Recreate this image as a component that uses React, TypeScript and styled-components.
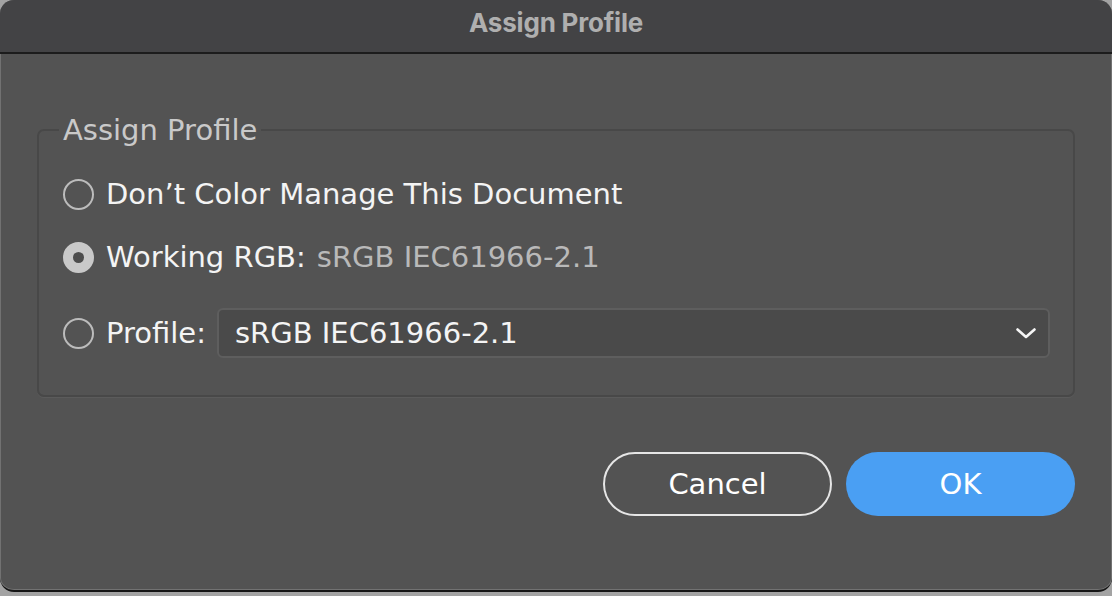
import styled, { createGlobalStyle } from 'styled-components';

const GlobalStyle = createGlobalStyle`
  html, body {
    margin: 0;
    padding: 0;
    background: #a3a3a3;
  }
  * {
    box-sizing: border-box;
  }
`;

interface RadioProps {
  readonly $checked?: boolean;
}

export default function App() {
  return (
    <>
      <GlobalStyle />
      <Window>
        <TitleBar>Assign Profile</TitleBar>
        <Body>
          <Group>
            <Legend>Assign Profile</Legend>
            <OptionRow>
              <Radio />
              <Label>Don’t Color Manage This Document</Label>
            </OptionRow>
            <OptionRow>
              <Radio $checked />
              <Label>Working RGB:</Label>
              <Value>sRGB IEC61966-2.1</Value>
            </OptionRow>
            <SelectRow>
              <Radio />
              <Label>Profile:</Label>
              <Select>
                <span>sRGB IEC61966-2.1</span>
                <svg width="20" height="11" viewBox="0 0 20 11">
                  <path
                    d="M1.5 1.5 L10 9 L18.5 1.5"
                    fill="none"
                    stroke="#f5f5f5"
                    strokeWidth="2.6"
                    strokeLinecap="round"
                    strokeLinejoin="round"
                  />
                </svg>
              </Select>
            </SelectRow>
          </Group>
          <Actions>
            <CancelButton>Cancel</CancelButton>
            <OkButton>OK</OkButton>
          </Actions>
        </Body>
      </Window>
    </>
  );
}

const Window = styled.div`
  width: 1112px;
  height: 592px;
  display: flex;
  flex-direction: column;
  background: #535353;
  border-radius: 14px;
  overflow: hidden;
  border-bottom: 2px solid #151515;
  box-shadow: inset 0 0 0 1px rgba(255, 255, 255, 0.18);
`;

const TitleBar = styled.div`
  height: 54px;
  flex: none;
  display: flex;
  align-items: center;
  justify-content: center;
  padding-bottom: 8px;
  background: #434345;
  border-bottom: 2px solid #1c1c1c;
  color: #afafaf;
  font-family: Inter, 'Liberation Sans', sans-serif;
  font-weight: 700;
  font-size: 26px;
  letter-spacing: -0.2px;
`;

const Body = styled.div`
  flex: 1;
  display: flex;
  flex-direction: column;
  padding: 59px 37px 0;
  font-family: 'DejaVu Sans', sans-serif;
`;

const Group = styled.fieldset`
  margin: 0;
  padding: 27px 24px 37px 24px;
  border: 2px solid #484848;
  border-radius: 7px;
  box-shadow: 0 1px 0 rgba(255, 255, 255, 0.05);
`;

const Legend = styled.legend`
  padding: 0 4px;
  margin-left: -4px;
  line-height: 34px;
  font-size: 29px;
  color: #c9c9c9;
`;

const OptionRow = styled.div`
  height: 40px;
  display: flex;
  align-items: center;
  margin-bottom: 23px;
`;

const SelectRow = styled(OptionRow)`
  height: 50px;
  margin-top: 31px;
  margin-bottom: 0;
`;

const Radio = styled.span<RadioProps>`
  flex: none;
  width: 31px;
  height: 31px;
  margin-right: 12px;
  border-radius: 50%;
  border: 2px solid #bcbcbc;
  background: ${(p) => (p.$checked ? '#c9c9c9' : 'transparent')};
  border-color: ${(p) => (p.$checked ? '#c9c9c9' : '#bcbcbc')};
  display: flex;
  align-items: center;
  justify-content: center;
  &::after {
    content: '';
    display: ${(p) => (p.$checked ? 'block' : 'none')};
    width: 11px;
    height: 11px;
    border-radius: 50%;
    background: #4d4d4d;
  }
`;

const Label = styled.span`
  font-size: 29px;
  color: #f4f4f4;
  white-space: nowrap;
`;

const Value = styled.span`
  margin-left: 11px;
  font-size: 29px;
  color: #b9b9b9;
  white-space: nowrap;
`;

const Select = styled.div`
  flex: 1;
  height: 50px;
  margin-left: 11px;
  margin-right: -1px;
  display: flex;
  align-items: center;
  justify-content: space-between;
  padding: 0 12px 0 16px;
  background: #4a4a4a;
  border: 2px solid #5e5e5e;
  border-radius: 6px;
  font-size: 29px;
  color: #f4f4f4;
`;

const Actions = styled.div`
  display: flex;
  justify-content: flex-end;
  gap: 14px;
  margin-top: 55px;
`;

const PillButton = styled.button`
  width: 229px;
  height: 64px;
  border-radius: 32px;
  font-family: 'DejaVu Sans', sans-serif;
  font-size: 29px;
  color: #ffffff;
  cursor: pointer;
`;

const CancelButton = styled(PillButton)`
  background: transparent;
  border: 2px solid #e6e6e6;
`;

const OkButton = styled(PillButton)`
  background: #4a9ff3;
  border: none;
`;
